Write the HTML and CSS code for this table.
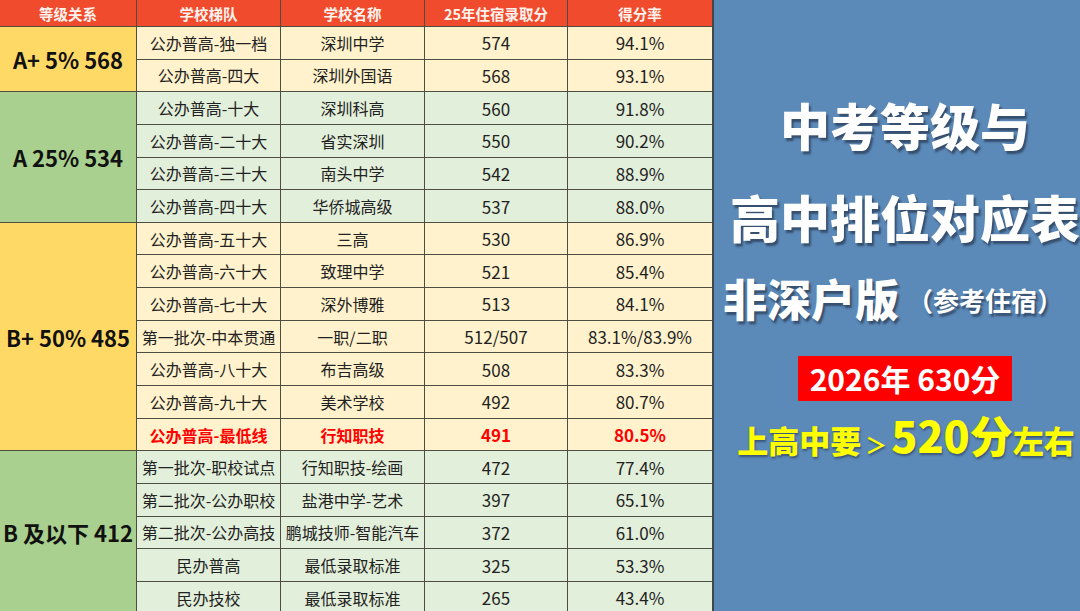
FILE: index.html
```html
<!DOCTYPE html>
<html lang="zh-CN">
<head>
<meta charset="utf-8">
<title>中考等级与高中排位对应表</title>
<link rel="stylesheet" href="styles.css">
</head>
<body>
<div class="page">
  <div class="sheet">
    <div class="th">等级关系</div>
    <div class="th">学校梯队</div>
    <div class="th">学校名称</div>
    <div class="th">25年住宿录取分</div>
    <div class="th">得分率</div>

    <div class="grade yellow span2">A+ 5% 568</div>
    <div class="td cream">公办普高-独一档</div><div class="td cream">深圳中学</div><div class="td cream num">574</div><div class="td cream num">94.1%</div>
    <div class="td cream">公办普高-四大</div><div class="td cream">深圳外国语</div><div class="td cream num">568</div><div class="td cream num">93.1%</div>

    <div class="grade green span4">A 25% 534</div>
    <div class="td mint">公办普高-十大</div><div class="td mint">深圳科高</div><div class="td mint num">560</div><div class="td mint num">91.8%</div>
    <div class="td mint">公办普高-二十大</div><div class="td mint">省实深圳</div><div class="td mint num">550</div><div class="td mint num">90.2%</div>
    <div class="td mint">公办普高-三十大</div><div class="td mint">南头中学</div><div class="td mint num">542</div><div class="td mint num">88.9%</div>
    <div class="td mint">公办普高-四十大</div><div class="td mint">华侨城高级</div><div class="td mint num">537</div><div class="td mint num">88.0%</div>

    <div class="grade yellow span7">B+ 50% 485</div>
    <div class="td cream">公办普高-五十大</div><div class="td cream">三高</div><div class="td cream num">530</div><div class="td cream num">86.9%</div>
    <div class="td cream">公办普高-六十大</div><div class="td cream">致理中学</div><div class="td cream num">521</div><div class="td cream num">85.4%</div>
    <div class="td cream">公办普高-七十大</div><div class="td cream">深外博雅</div><div class="td cream num">513</div><div class="td cream num">84.1%</div>
    <div class="td cream">第一批次-中本贯通</div><div class="td cream">一职/二职</div><div class="td cream num">512/507</div><div class="td cream num">83.1%/83.9%</div>
    <div class="td cream">公办普高-八十大</div><div class="td cream">布吉高级</div><div class="td cream num">508</div><div class="td cream num">83.3%</div>
    <div class="td cream">公办普高-九十大</div><div class="td cream">美术学校</div><div class="td cream num">492</div><div class="td cream num">80.7%</div>
    <div class="td cream red">公办普高-最低线</div><div class="td cream red">行知职技</div><div class="td cream red num">491</div><div class="td cream red num">80.5%</div>

    <div class="grade green span5">B 及以下 412</div>
    <div class="td mint">第一批次-职校试点</div><div class="td mint">行知职技-绘画</div><div class="td mint num">472</div><div class="td mint num">77.4%</div>
    <div class="td mint">第二批次-公办职校</div><div class="td mint">盐港中学-艺术</div><div class="td mint num">397</div><div class="td mint num">65.1%</div>
    <div class="td mint">第二批次-公办高技</div><div class="td mint">鹏城技师-智能汽车</div><div class="td mint num">372</div><div class="td mint num">61.0%</div>
    <div class="td mint">民办普高</div><div class="td mint">最低录取标准</div><div class="td mint num">325</div><div class="td mint num">53.3%</div>
    <div class="td mint">民办技校</div><div class="td mint">最低录取标准</div><div class="td mint num">265</div><div class="td mint num">43.4%</div>
  </div>

  <div class="panel">
    <div class="title t1">中考等级与</div>
    <div class="title t2">高中排位对应表</div>
    <div class="title t3">非深户版<span class="note">（参考住宿）</span></div>
    <div class="badge-row"><span class="badge">2026年 630分</span></div>
    <div class="goal"><span class="g-sm">上高中要</span><span class="g-gt">＞</span><span class="g-big">520分</span><span class="g-sm">左右</span></div>
  </div>
</div>
</body>
</html>
```

FILE: styles.css
```css
* { box-sizing: border-box; }
html, body { margin: 0; padding: 0; }
body {
  width: 1080px;
  height: 611px;
  overflow: hidden;
  background: #5b89b8;
  font-family: "Noto Sans CJK SC", "Noto Sans", sans-serif;
}
.page {
  display: flex;
  width: 1080px;
  height: 611px;
  overflow: hidden;
}
.sheet {
  flex: 0 0 714px;
  display: grid;
  grid-template-columns: 136px 143px 143px 142px 144px;
  grid-template-rows: 26px repeat(18, 31.65px);
  gap: 1px;
  background: #4d4d42;
  border-right: 2px solid #3f4a4a;
  align-content: start;
}
.th {
  background: #f04b2c;
  color: #fff3ee;
  font-weight: 700;
  font-size: 14.5px;
  display: flex;
  align-items: center;
  justify-content: center;
}
.td {
  display: flex;
  align-items: center;
  justify-content: center;
  font-size: 16px;
  color: #222;
  white-space: nowrap;
  overflow: hidden;
}
.num { font-size: 17px; }
.cream { background: #fff2cc; }
.mint { background: #e2efda; }
.red { color: #f00; font-weight: 700; }
.grade {
  grid-column: 1;
  display: flex;
  align-items: center;
  justify-content: center;
  font-size: 22px;
  font-weight: 700;
  color: #111;
  white-space: nowrap;
}
.yellow { background: #ffd966; }
.green { background: #a9d08e; }
.span2 { grid-row: span 2; }
.span4 { grid-row: span 4; }
.span5 { grid-row: span 5; }
.span7 { grid-row: span 7; }

.panel {
  flex: 1 1 auto;
  display: flex;
  flex-direction: column;
  align-items: center;
  padding-left: 16px;
  overflow: hidden;
  white-space: nowrap;
}
.title {
  color: #fff;
  font-weight: 900;
  text-shadow: 2px 3px 2px rgba(30, 40, 60, 0.6);
  line-height: 1;
}
.t1 { font-size: 50px; margin-top: 99px; }
.t2 { font-size: 50px; margin-top: 42px; }
.t3 { font-size: 44px; margin-top: 35px; display: flex; align-items: center; margin-left: -24px; }
.note { font-size: 26px; font-weight: 700; margin-left: 8px; margin-top: 4px; }
.badge-row { margin-top: 36px; }
.badge {
  display: inline-block;
  background: #ff0000;
  color: #fff;
  font-weight: 700;
  font-size: 30px;
  line-height: 45px;
  height: 45px;
  padding: 0 12px;
}
.goal {
  margin-top: 2px;
  color: #ffff00;
  font-weight: 900;
  display: flex;
  align-items: baseline;
  text-shadow: 1px 2px 2px rgba(30, 40, 60, 0.5);
  margin-left: 2px;
}
.g-sm { font-size: 31px; }
.g-gt { font-size: 22px; margin: 0 4px; font-weight: 700; }
.g-big { font-size: 43px; }
```
